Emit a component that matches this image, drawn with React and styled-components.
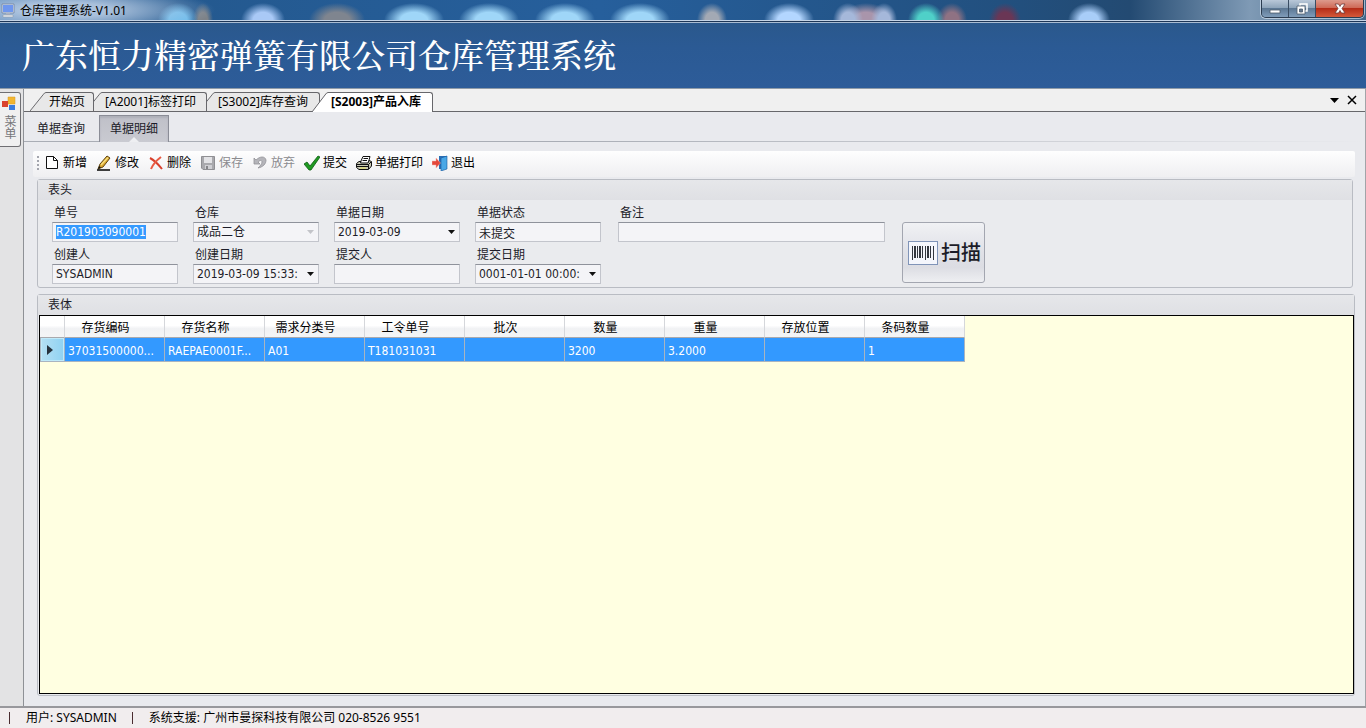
import React, { useEffect, useRef } from "react";
import styled, { createGlobalStyle, css } from "styled-components";

const uiFont = `"Noto Sans", "Noto Sans CJK SC", sans-serif`;
const dataFont = `"DejaVu Sans Condensed", "Noto Sans CJK SC", sans-serif`;

const GlobalStyle = createGlobalStyle`
  * {
    box-sizing: border-box;
  }

  body {
    margin: 0;
    background: #e9eaee;
    color: #1c1c28;
    font-family: ${uiFont};
    font-size: 12px;
    line-height: 16px;
  }

  button,
  input,
  select {
    font: inherit;
    color: inherit;
  }
`;

// Blurred desktop icons seen through the glass title bar
const blobs = [
  [178, 20, "#6dbcec"],
  [203, 10, "#7d8288"],
  [263, 22, "#a9c9f6"],
  [337, 28, "#7f858f"],
  [414, 30, "#9fd6f8"],
  [489, 30, "#9fd6f8"],
  [565, 30, "#9fd6f8"],
  [640, 30, "#9fd6f8"],
  [712, 15, "#a3a9b4"],
  [789, 25, "#b3d6ff"],
  [848, 15, "#a5b8da"],
  [884, 13, "#a5b8da"],
  [866, 26, "#a995ab"],
  [926, 18, "#4fd0c8"],
  [952, 15, "#8f7283"],
  [1005, 16, "#6a3655"],
  [1089, 21, "#a8cdf8"],
];

const glass = blobs
  .map(
    ([x, r, color]) =>
      `radial-gradient(${r}px 17px at ${x}px 20px, ${color} 45%, transparent 100%)`
  )
  .join(", ");

// Window frame
const Window = styled.div`
  display: flex;
  flex-direction: column;
  min-height: 100vh;
`;

const TitleBar = styled.header`
  display: flex;
  align-items: center;
  gap: 4px;
  height: 20px;
  background:
    radial-gradient(150px 24px at 65px 10px, rgba(190, 208, 230, 0.85) 30%, transparent 100%),
    ${glass},
    linear-gradient(90deg, #4a7db3 0, #24598f 180px, #265f9c 600px, #22507f 1000px, #234a72 1130px, #7f9ab5 1250px, #3f6688 100%);
`;

const AppName = styled.span`
  flex: 1;
  padding-top: 2px;
  color: #000;
`;

const WindowButtons = styled.div`
  display: flex;
  align-self: flex-start;
  height: 18px;
  margin-right: 2px;
  border: 1px solid #2b3c50;
  border-top: 0;
  border-radius: 0 0 5px 5px;
  overflow: hidden;
  box-shadow: 0 0 0 1px rgba(230, 240, 250, 0.6);
`;

const WindowButton = styled.button`
  display: flex;
  align-items: center;
  justify-content: center;
  width: ${(props) => (props.$close ? "47px" : "27px")};
  padding: 0;
  border: 0;
  border-right: ${(props) => (props.$close ? "0" : "1px solid #3a4d63")};
  background: ${(props) =>
    props.$close
      ? "linear-gradient(#dd9a8c 0, #cf6a57 45%, #b52d18 50%, #d4593a 100%)"
      : "linear-gradient(#b9c8d8 0, #8fa5bb 45%, #5d7894 50%, #7f9cb9 100%)"};
`;

const Banner = styled.div`
  height: 69px;
  padding-left: 22px;
  border-top: 1px solid #c3d3e6;
  border-bottom: 1px solid #8f9ba8;
  background: linear-gradient(#2a588c 0, #2b5a94 40%, #2d5c99 100%);
  box-shadow: inset 0 1px 0 #1d3556, inset 0 2px 0 #a9bcd2;
`;

const BannerTitle = styled.h1`
  margin: 0;
  color: #fff;
  font-family: "Noto Serif CJK SC", "Noto Sans CJK SC", serif;
  font-size: 33px;
  font-weight: 500;
  line-height: 66px;
`;

const Workspace = styled.div`
  display: flex;
  flex: 1;
  background: #e3e3e4;
`;

const SideStrip = styled.nav`
  width: 23px;
  padding-top: 3px;
`;

const SideTab = styled.button`
  display: flex;
  flex-direction: column;
  align-items: center;
  gap: 3px;
  width: 21px;
  height: 55px;
  padding: 3px 2px 0 0;
  border: 1px solid #6f6f73;
  border-left: 0;
  border-radius: 0 3px 3px 0;
  background: #f0f0f0;
  color: #77777a;
  line-height: 12px;
`;

const SideLabel = styled.span`
  writing-mode: vertical-rl;
`;

const Main = styled.main`
  display: flex;
  flex: 1;
  flex-direction: column;
  min-width: 0;
  border-left: 1px solid #8e9196;
  border-right: 1px solid #a2a4a8;
  background: #e9eaee;
`;

// Document tabs
const TabStrip = styled.div`
  display: flex;
  justify-content: space-between;
  height: 23px;
  border-bottom: 1px solid #67676b;
  background: #f0f0f0;
`;

const TabList = styled.div`
  display: flex;
  align-items: flex-end;
  padding-left: 14px;
`;

const Tab = styled.button`
  position: relative;
  z-index: ${(props) => props.$order};
  display: flex;
  min-width: ${(props) => (props.$wide ? "121px" : "0")};
  height: 19px;
  margin-left: -8px;
  padding: 0;
  border: 0;
  background: none;
  color: #000;

  ${(props) =>
    props.$active &&
    css`
      height: 20px;
      margin-bottom: -1px;
      font-weight: 700;
    `}
`;

const TabSlope = styled.svg`
  display: block;
  width: 16px;
  height: 100%;
`;

const TabBody = styled.span`
  flex: 1;
  height: 100%;
  padding: 0 8px 0 3px;
  border-top: 1px solid #67676b;
  border-right: 1px solid #67676b;
  border-radius: 0 3px 0 0;
  background: ${(props) => (props.$active ? "#fff" : "#e8e8e8")};
  line-height: 18px;
  text-align: left;
`;

const StripTools = styled.div`
  display: flex;
  align-items: center;
  gap: 6px;
  padding-right: 8px;
`;

const StripButton = styled.button`
  display: flex;
  align-items: center;
  justify-content: center;
  width: 11px;
  height: 16px;
  padding: 0;
  border: 0;
  background: none;
`;

// Page tabs under the document tabs
const PageTabs = styled.div`
  display: flex;
  align-items: flex-end;
  gap: 3px;
  height: 30px;
  padding-left: 2px;
  background: linear-gradient(90deg, #a9adb5 0, #a9adb5 40%, #e9eaee 100%) bottom / 100% 1px no-repeat;
`;

const PageTab = styled.button`
  position: relative;
  height: 27px;
  padding: 0 10px;
  border: 1px solid transparent;
  border-bottom: 0;
  background: none;
  line-height: 26px;

  ${(props) =>
    props.$active &&
    css`
      border-color: #8b8d97;
      background: linear-gradient(#bfc0c8, #c9cad1);
      box-shadow: inset 0 2px 2px #aeb0b9;

      &::after {
        content: "";
        position: absolute;
        bottom: 0;
        left: 50%;
        margin-left: -5px;
        border: 5px solid transparent;
        border-top: 0;
        border-bottom-color: #eeeff2;
      }
    `}
`;

const Page = styled.section`
  display: flex;
  flex: 1;
  flex-direction: column;
  padding: 9px 10px 10px 9px;
`;

const Toolbar = styled.div`
  display: flex;
  align-items: center;
  gap: 9px;
  height: 26px;
  padding: 0 0 2px 4px;
  border-radius: 2px;
  background: linear-gradient(#fefefe, #efeff1);
`;

const Grip = styled.span`
  width: 2px;
  height: 14px;
  margin-right: -4px;
  background: repeating-linear-gradient(#a3a5ad 0, #a3a5ad 2px, transparent 2px, transparent 4px);
`;

const ToolButton = styled.button`
  display: flex;
  align-items: center;
  gap: 3px;
  padding: 0;
  border: 0;
  background: none;
  color: #000;

  &:disabled {
    color: #8b8b8f;
  }
`;

// Panels
const Panels = styled.div`
  display: flex;
  flex: 1;
  flex-direction: column;
  gap: 6px;
  padding: 2px 0 0 4px;
`;

const Panel = styled.section`
  display: flex;
  flex: ${(props) => (props.$fill ? "1" : "none")};
  flex-direction: column;
  margin-right: ${(props) => (props.$fill ? "0" : "2px")};
  border: 1px solid #b9bcc3;
  border-radius: 3px;
  background: #eaebee;
`;

const PanelTitle = styled.h2`
  margin: 0;
  padding-left: 10px;
  background: linear-gradient(#e6e7ea, #dfe0e4);
  font-size: 12px;
  font-weight: 400;
  line-height: 20px;
`;

const HeaderForm = styled.form`
  display: flex;
  padding: 4px 14px 3px;
`;

const FieldGrid = styled.div`
  display: grid;
  grid-template-columns: repeat(4, 126px);
  gap: 4px 15px;
  margin-right: 17px;
`;

const Field = styled.div`
  display: flex;
  flex-direction: column;
  width: ${(props) => (props.$wide ? "267px" : "auto")};
`;

const FieldLabel = styled.label`
  padding-left: 2px;
  line-height: 18px;
`;

const control = css`
  width: 100%;
  height: 20px;
  padding: 0 0 0 3px;
  border: 1px solid #c3c5cc;
  border-top-color: #8f929b;
  border-radius: 0;
  outline: 0;
  background: #f4f4f7;
  color: #1c1c28;
  font-family: ${dataFont};
`;

const TextBox = styled.input`
  ${control}

  &::selection {
    background: rgba(51, 153, 255, 0.99);
    color: #fff;
  }
`;

const ComboWrap = styled.div`
  position: relative;
`;

const Combo = styled.select`
  ${control}
  display: block;
  padding-right: 18px;
  appearance: none;
  opacity: 1;
`;

const ComboArrow = styled.svg`
  position: absolute;
  top: 8px;
  right: 5px;
  pointer-events: none;
`;

const ScanButton = styled.button`
  display: flex;
  align-items: center;
  gap: 3px;
  width: 83px;
  height: 61px;
  margin: 18px 0 0 17px;
  padding: 0 0 0 5px;
  border: 1px solid #a3a6b0;
  border-radius: 3px;
  background: linear-gradient(#f0f1f4 0, #e0e1e7 50%, #dcdde3 75%, #eeeff2 100%);
  font-size: 20px;
  font-weight: 500;
  white-space: nowrap;
`;

// Data grid
const GridArea = styled.div`
  flex: 1;
  margin: 0 0 1px 1px;
  border: 1px solid #000;
  background: #ffffe1;
`;

const Grid = styled.table`
  width: 925px;
  table-layout: fixed;
  border-collapse: separate;
  border-spacing: 0;
`;

const HeadCell = styled.th`
  width: ${(props) => (props.$corner ? "25px" : "100px")};
  height: 22px;
  padding: 2px 18px 0 0;
  border-right: 1px solid #d5d7db;
  border-bottom: 1px solid #a9a9ad;
  background: linear-gradient(#fff 0, #fff 45%, #f1f2f4 60%, #f4f5f6 100%);
  color: #000;
  font-weight: 400;
`;

const Cell = styled.td`
  height: 24px;
  padding: 2px 0 0 3px;
  overflow: hidden;
  border-right: 1px solid #a9b4c0;
  border-bottom: 1px solid #a9b4c0;
  background: #3399ff;
  color: #fff;
  font-family: ${dataFont};
  white-space: nowrap;
`;

const RowHead = styled.td`
  padding: 2px 0 0 6px;
  border: 1px solid #a9b4c0;
  border-top: 0;
  background: linear-gradient(90deg, #b5e0f4, #8fd2f2);
  box-shadow: inset 0 0 0 1px #bfeafa;
  line-height: 10px;
`;

const StatusBar = styled.footer`
  display: flex;
  align-items: center;
  gap: 14px;
  height: 22px;
  padding-left: 8px;
  border-top: 2px solid #98989c;
  background: #f1edee;
  color: #000;
`;

const StatusDivider = styled.span`
  width: 1px;
  height: 12px;
  margin: 0 2px 0 1px;
  background: #4a2c30;
`;

const Icon = ({ children, size = 16 }) => (
  <svg width={size} height="16" viewBox={`0 0 ${size} 16`} aria-hidden="true">
    {children}
  </svg>
);

const NewIcon = () => (
  <Icon>
    <path d="M2.500 1.500H9.500L13.500 5.500V13.500H2.500Z" fill="#fff" stroke="#111" />
    <path d="M9.500 1.500V5.500H13.500" fill="none" stroke="#111" />
  </Icon>
);

const EditIcon = () => (
  <Icon>
    <path d="M2 14L4 9L11 1L14 3L7 12Z" fill="#d9a62e" stroke="#5f4310" />
    <path d="M5 10L12 2.500" stroke="#f8df7f" strokeWidth="1.500" />
    <path d="M2 14L3.200 11L5 12.500Z" fill="#111" />
    <path d="M1 15H14" stroke="#000" strokeWidth="1.500" />
  </Icon>
);

const DeleteIcon = () => (
  <Icon>
    <path d="M2 3C6 5 10 9 14 14" fill="none" stroke="#d8402c" strokeWidth="2" />
    <path d="M13 2C9 5 5 9 3 14" fill="none" stroke="#e85a42" strokeWidth="2" />
  </Icon>
);

const SaveIcon = () => (
  <Icon>
    <path d="M1.500 1.500H14.500V14.500H3L1.500 13Z" fill="#a9a9ad" stroke="#8f8f93" />
    <path d="M4 2H12V8H4Z" fill="#e3e3e6" />
    <path d="M5 10H12V14H5Z" fill="#d0d0d4" />
    <path d="M6 11H8V14H6Z" fill="#858589" />
  </Icon>
);

const UndoIcon = () => (
  <Icon>
    <path d="M2 3V9H8L6 7C8 5 10 5 10 7C10 9 8 11 6 13C11 12 14 9 14 5C13 1 8 1 4 5Z" fill="#b5b5ba" stroke="#929297" strokeWidth="0.800" />
  </Icon>
);

const SubmitIcon = () => (
  <Icon>
    <path d="M0 9L3 7L6 11L14 1L16 2L7 15H5Z" fill="#1f9a22" stroke="#0b5c10" strokeWidth="0.800" />
  </Icon>
);

const PrintIcon = () => (
  <Icon>
    <path d="M4.500 7L7 1.500H14L12.500 7" fill="#fff" stroke="#111" />
    <path d="M7.500 3.500H12M6.500 5.500H11" stroke="#111" />
    <path d="M0.500 8.500L3 6.500H5L4.500 8H12L13 5.500L15.500 6.500V11L12.500 14.500H3L0.500 12.500Z" fill="#c9c9b6" stroke="#111" />
    <path d="M1 9.500H12.500V14M1 11.500H12M12.500 9.500L15 7" fill="none" stroke="#111" />
    <path d="M4 13H10" stroke="#e5e25c" />
  </Icon>
);

const ExitIcon = () => (
  <Icon>
    <path d="M7 1H15V14H7Z" fill="#2a6eb5" />
    <path d="M9 3L15 1V14L9 16Z" fill="#49a7e6" stroke="#17589c" strokeWidth="0.600" />
    <path d="M0 6H4V3L8.500 8L4 13V10H0Z" fill="#e4473b" stroke="#f3b0a8" strokeWidth="0.500" />
  </Icon>
);

const BarcodeIcon = () => (
  <svg width="30" height="24" viewBox="0 0 30 24" aria-hidden="true">
    <rect x="0.500" y="0.500" width="29" height="23" fill="#f4f6fc" stroke="#8094b8" />
    <path d="M4.500 5V19M9.500 5V17M14.500 5V17M17.500 5V19M22.500 5V17M25.500 5V19" stroke="#33373f" />
    <path d="M7 5V17M12 5V17M20 5V17" stroke="#33373f" strokeWidth="2" />
  </svg>
);

const Arrow = ({ color = "#111" }) => (
  <ComboArrow width="7" height="4" viewBox="0 0 7 4" aria-hidden="true">
    <path d="M0 0H7L3.500 4Z" fill={color} />
  </ComboArrow>
);

const tabs = ["开始页", "[A2001]标签打印", "[S3002]库存查询", "[S2003]产品入库"];

const tools = [
  { label: "新增", icon: NewIcon },
  { label: "修改", icon: EditIcon },
  { label: "删除", icon: DeleteIcon },
  { label: "保存", icon: SaveIcon, disabled: true },
  { label: "放弃", icon: UndoIcon, disabled: true },
  { label: "提交", icon: SubmitIcon },
  { label: "单据打印", icon: PrintIcon },
  { label: "退出", icon: ExitIcon },
];

const fields = [
  { id: "billNo", label: "单号", value: "R201903090001" },
  { id: "warehouse", label: "仓库", value: "成品二仓", combo: true, disabled: true },
  { id: "billDate", label: "单据日期", value: "2019-03-09", combo: true },
  { id: "state", label: "单据状态", value: "未提交" },
  { id: "creator", label: "创建人", value: "SYSADMIN" },
  { id: "createDate", label: "创建日期", value: "2019-03-09 15:33:", combo: true },
  { id: "submitter", label: "提交人", value: "" },
  { id: "submitDate", label: "提交日期", value: "0001-01-01 00:00:", combo: true },
];

const columns = [
  "存货编码",
  "存货名称",
  "需求分类号",
  "工令单号",
  "批次",
  "数量",
  "重量",
  "存放位置",
  "条码数量",
];

const row = ["37031500000...", "RAEPAE0001F...", "A01", "T181031031", "", "3200", "3.2000", "", "1"];

const DocumentTab = ({ label, active, wide, order }) => (
  <Tab type="button" $active={active} $wide={wide} $order={order}>
    <TabSlope viewBox="0 0 16 20" preserveAspectRatio="none" aria-hidden="true">
      <path
        d="M0 20L13 3Q14.500 0.500 16 0.500V20Z"
        fill={active ? "#fff" : "#e8e8e8"}
      />
      <path d="M0 20L13 3Q14.500 0.500 16 0.500" fill="none" stroke="#67676b" />
    </TabSlope>
    <TabBody $active={active}>{label}</TabBody>
  </Tab>
);

const FormField = ({ field, inputRef }) => (
  <Field>
    <FieldLabel htmlFor={field.id}>{field.label}</FieldLabel>
    {field.combo ? (
      <ComboWrap>
        <Combo id={field.id} disabled={field.disabled} defaultValue={field.value}>
          <option>{field.value}</option>
        </Combo>
        <Arrow color={field.disabled ? "#c3c4c9" : "#111"} />
      </ComboWrap>
    ) : (
      <TextBox id={field.id} ref={inputRef} defaultValue={field.value} />
    )}
  </Field>
);

const App = () => {
  const billNoRef = useRef(null);

  useEffect(() => {
    billNoRef.current.focus();
    billNoRef.current.select();
  }, []);

  return (
    <Window>
      <GlobalStyle />
      <TitleBar>
        <Icon>
          <path d="M2 2H14V11H2Z" fill="#dce6f5" stroke="#7d8da8" />
          <path d="M3 3H13V10H3Z" fill="#6f97ee" />
          <path d="M6 11H10V13H6Z" fill="#a9b3c4" />
          <path d="M3 13H13V15H3Z" fill="#e6eaf0" stroke="#8a94a3" strokeWidth="0.500" />
        </Icon>
        <AppName>仓库管理系统-V1.01</AppName>
        <WindowButtons>
          <WindowButton type="button" aria-label="最小化">
            <Icon>
              <path d="M3 9H13V12H3Z" fill="#fff" stroke="#4b5a6b" strokeWidth="0.800" />
            </Icon>
          </WindowButton>
          <WindowButton type="button" aria-label="还原">
            <Icon>
              <path d="M6 3H13V10H6Z" fill="none" stroke="#fff" strokeWidth="1.500" />
              <path d="M3 5H11V13H3Z" fill="#fff" stroke="#4b5a6b" strokeWidth="0.800" />
              <path d="M5.500 8H8.500V11H5.500Z" fill="#62788f" stroke="#4b5a6b" strokeWidth="0.800" />
            </Icon>
          </WindowButton>
          <WindowButton type="button" aria-label="关闭" $close>
            <Icon>
              <path
                d="M3 3H6.500L8 5.500L9.500 3H13L10 7.500L13 12H9.500L8 9.500L6.500 12H3L6 7.500Z"
                fill="#fff"
                stroke="#6e3a38"
                strokeWidth="0.800"
              />
            </Icon>
          </WindowButton>
        </WindowButtons>
      </TitleBar>
      <Banner>
        <BannerTitle>广东恒力精密弹簧有限公司仓库管理系统</BannerTitle>
      </Banner>

      <Workspace>
        <SideStrip>
          <SideTab type="button">
            <Icon>
              <path d="M7 1H14V8H7Z" fill="#f2b632" stroke="#d99a1c" strokeWidth="0.500" />
              <path d="M1 5H7V11H1Z" fill="#d9432f" />
              <path d="M8 9H14V14H8Z" fill="#3b7de0" />
            </Icon>
            <SideLabel>菜单</SideLabel>
          </SideTab>
        </SideStrip>

        <Main>
          <TabStrip>
            <TabList>
              {tabs.map((label, index) => {
                const active = index === tabs.length - 1;
                return (
                  <DocumentTab
                    key={label}
                    label={label}
                    active={active}
                    wide={index > 0}
                    order={active ? tabs.length : tabs.length - 1 - index}
                  />
                );
              })}
            </TabList>
            <StripTools>
              <StripButton type="button" aria-label="窗口列表">
                <svg width="9" height="5" viewBox="0 0 9 5" aria-hidden="true">
                  <path d="M0 0H9L4.500 5Z" fill="#000" />
                </svg>
              </StripButton>
              <StripButton type="button" aria-label="关闭标签">
                <svg width="10" height="10" viewBox="0 0 10 10" aria-hidden="true">
                  <path d="M1 1L9 9M9 1L1 9" stroke="#000" strokeWidth="1.500" />
                </svg>
              </StripButton>
            </StripTools>
          </TabStrip>

          <PageTabs>
            <PageTab type="button">单据查询</PageTab>
            <PageTab type="button" $active>
              单据明细
            </PageTab>
          </PageTabs>

          <Page>
            <Toolbar>
              <Grip />
              {tools.map(({ label, icon: ToolIcon, disabled }) => (
                <ToolButton key={label} type="button" disabled={disabled}>
                  <ToolIcon />
                  {label}
                </ToolButton>
              ))}
            </Toolbar>

            <Panels>
              <Panel>
                <PanelTitle>表头</PanelTitle>
                <HeaderForm>
                  <FieldGrid>
                    {fields.map((field, index) => (
                      <FormField
                        key={field.id}
                        field={field}
                        inputRef={index === 0 ? billNoRef : undefined}
                      />
                    ))}
                  </FieldGrid>
                  <Field $wide>
                    <FieldLabel htmlFor="remark">备注</FieldLabel>
                    <TextBox id="remark" />
                  </Field>
                  <ScanButton type="button">
                    <BarcodeIcon />
                    扫描
                  </ScanButton>
                </HeaderForm>
              </Panel>

              <Panel $fill>
                <PanelTitle>表体</PanelTitle>
                <GridArea>
                  <Grid>
                    <thead>
                      <tr>
                        <HeadCell $corner />
                        {columns.map((name) => (
                          <HeadCell key={name}>{name}</HeadCell>
                        ))}
                      </tr>
                    </thead>
                    <tbody>
                      <tr>
                        <RowHead>
                          <svg width="6" height="10" viewBox="0 0 6 10" aria-hidden="true">
                            <path d="M0 0L6 5L0 10Z" fill="#26323d" />
                          </svg>
                        </RowHead>
                        {row.map((value, index) => (
                          <Cell key={columns[index]}>{value}</Cell>
                        ))}
                      </tr>
                    </tbody>
                  </Grid>
                </GridArea>
              </Panel>
            </Panels>
          </Page>
        </Main>
      </Workspace>

      <StatusBar>
        <StatusDivider />
        <span>用户: SYSADMIN</span>
        <StatusDivider />
        <span>系统支援: 广州市曼探科技有限公司 020-8526 9551</span>
      </StatusBar>
    </Window>
  );
};

export default App;
